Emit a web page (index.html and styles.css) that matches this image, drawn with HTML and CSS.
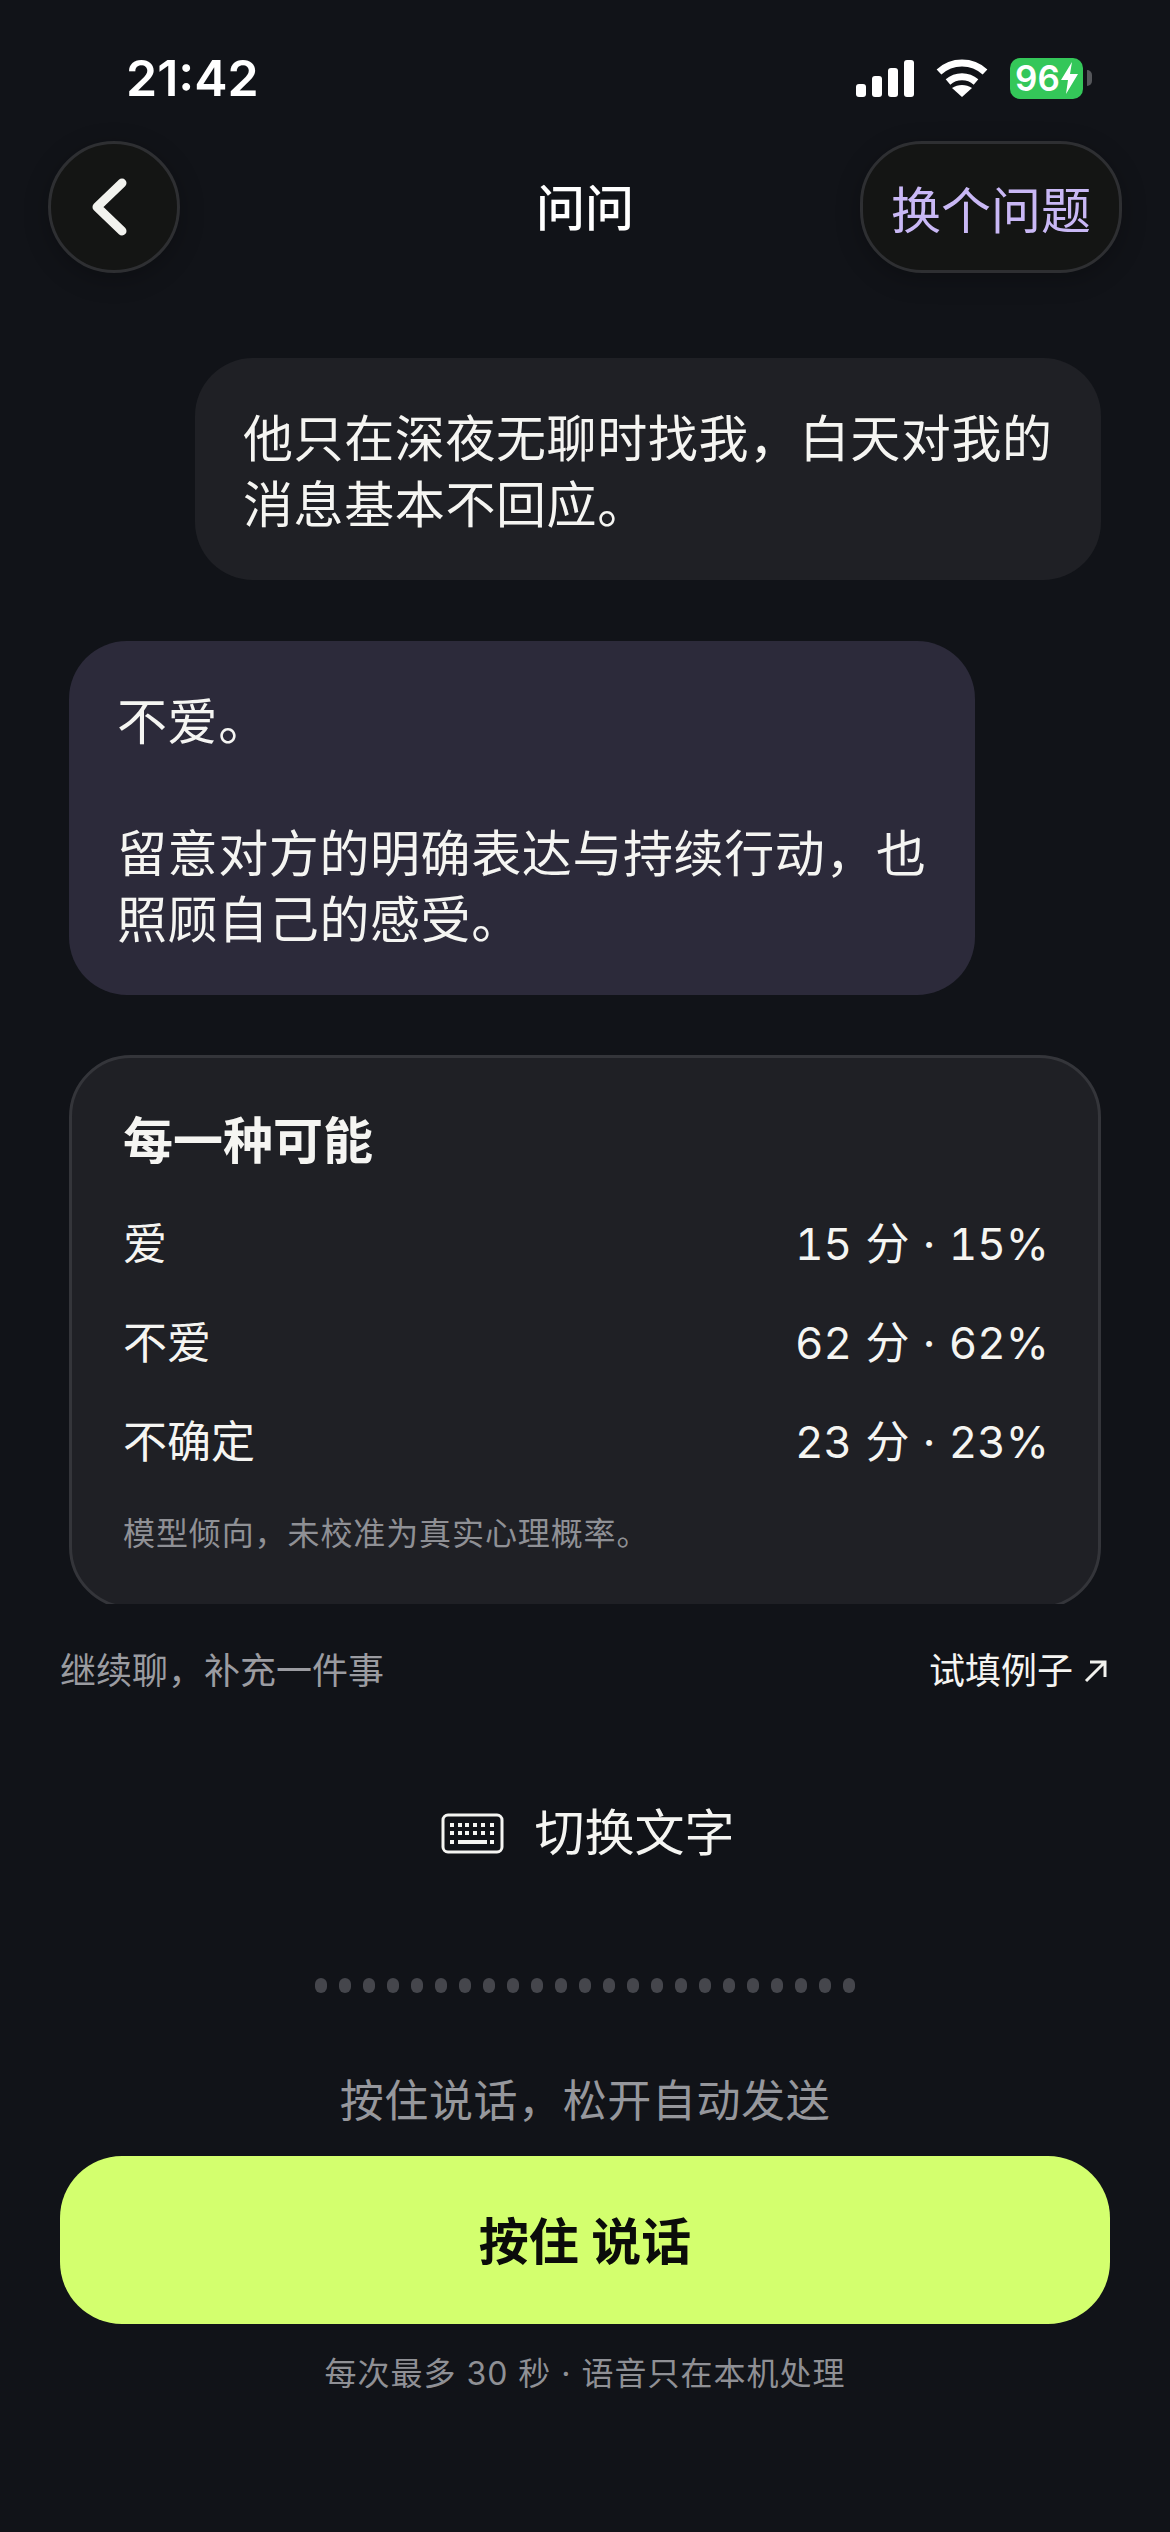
FILE: index.html
```html
<!DOCTYPE html>
<html lang="zh">
<head>
<title>问问</title>
<meta name="viewport" content="width=device-width, initial-scale=1">
<link rel="stylesheet" href="styles.css">
</head>
<body>

<div class="status">
  <span class="time">21:42</span>
  <div class="status-icons">
    <svg width="58" height="37" viewBox="0 0 58 37"><g fill="#fff"><rect x="0" y="24" width="10" height="13" rx="3"/><rect x="16" y="16" width="10" height="21" rx="3"/><rect x="32" y="8" width="10" height="29" rx="3"/><rect x="48" y="0" width="10" height="37" rx="3"/></g></svg>
    <svg width="52" height="38" viewBox="0 0 52 38"><g fill="none" stroke="#fff" stroke-width="7"><path d="M3 13C16 1 36 1 49 13"/><path d="M12 23C20 16 32 16 40 23"/></g><path d="M26 38 L16 29 C22 25 30 25 36 29Z" fill="#fff"/></svg>
    <div class="battery"><span>96</span><svg width="17" height="32" viewBox="0 0 17 32"><path d="M11 0 L0 18 H7 L5 32 L17 12 H9Z" fill="#fff"/></svg></div>
  </div>
</div>

<div class="topbar">
  <button class="back">
    <svg width="40" height="64" viewBox="0 0 40 64"><path d="M32 8 L7 32 L32 56" fill="none" stroke="#f2f2ee" stroke-width="9" stroke-linecap="round" stroke-linejoin="round"/></svg>
  </button>
  <div class="title">问问</div>
  <button class="swap">换个问题</button>
</div>

<div class="chat">
  <div class="bubble user">他只在深夜无聊时找我，白天对我的消息基本不回应。</div>
  <div class="bubble reply">不爱。<br><br>留意对方的明确表达与持续行动，也照顾自己的感受。</div>

  <div class="card">
    <h3>每一种可能</h3>
    <div class="row"><span>爱</span><span class="value">15 分 · 15%</span></div>
    <div class="row"><span>不爱</span><span class="value">62 分 · 62%</span></div>
    <div class="row"><span>不确定</span><span class="value">23 分 · 23%</span></div>
    <p class="card-note">模型倾向，未校准为真实心理概率。</p>
  </div>
</div>

<div class="hints">
  <span class="hint-left">继续聊，补充一件事</span>
  <span class="hint-right">试填例子
    <svg width="24" height="24" viewBox="0 0 24 24"><path d="M2 22 L21 3 M6 3 H21 V18" fill="none" stroke="#f2f2ee" stroke-width="3"/></svg>
  </span>
</div>

<div class="switch">
  <svg width="63" height="41" viewBox="0 0 63 41">
    <rect x="2" y="2" width="59" height="37" rx="5" fill="none" stroke="#f5f5f2" stroke-width="3"/>
    <g fill="#f5f5f2">
      <rect x="9" y="10" width="4" height="4"/><rect x="17" y="10" width="4" height="4"/><rect x="24" y="10" width="4" height="4"/><rect x="32" y="10" width="4" height="4"/><rect x="40" y="10" width="4" height="4"/><rect x="49" y="10" width="4" height="4"/>
      <rect x="9" y="18" width="4" height="4"/><rect x="17" y="18" width="4" height="4"/><rect x="24" y="18" width="4" height="4"/><rect x="32" y="18" width="4" height="4"/><rect x="40" y="18" width="4" height="4"/><rect x="49" y="18" width="4" height="4"/>
      <rect x="9" y="27" width="4" height="4"/><rect x="17" y="27" width="29" height="4"/><rect x="49" y="27" width="4" height="4"/>
    </g>
  </svg>
  <span>切换文字</span>
</div>

<div class="dots">
  <i></i><i></i><i></i><i></i><i></i><i></i><i></i><i></i><i></i><i></i><i></i><i></i>
  <i></i><i></i><i></i><i></i><i></i><i></i><i></i><i></i><i></i><i></i><i></i>
</div>

<p class="press-hint">按住说话，松开自动发送</p>
<button class="talk">按住 说话</button>
<p class="foot">每次最多 30 秒 · 语音只在本机处理</p>

</body>
</html>
```

FILE: styles.css
```css
* {
  box-sizing: border-box;
}

body {
  margin: 0;
  height: 2532px;
  overflow: hidden;
  background-color: #111318;
  color: #f5f5f2;
  font-family: Inter, "Noto Sans CJK SC", sans-serif;
}

button {
  font-family: inherit;
  padding: 0;
}

.status {
  display: flex;
  justify-content: space-between;
  align-items: center;
  height: 60px;
  margin-top: 48px;
  padding: 0 87px 0 126px;
}

.time {
  font-size: 50px;
  font-weight: 600;
  color: #fff;
}

.status-icons {
  display: flex;
  align-items: center;
  gap: 22px;
}

.battery {
  position: relative;
  display: flex;
  align-items: center;
  justify-content: center;
  gap: 1px;
  width: 73px;
  height: 41px;
  border-radius: 10px;
  background-color: #34c759;
  color: #fff;
  font-size: 35px;
  font-weight: 600;
  line-height: 1;
}

.battery:after {
  content: '';
  position: absolute;
  right: -9px;
  top: 12px;
  width: 5px;
  height: 16px;
  border-radius: 0 6px 6px 0;
  background-color: #55565a;
}

.topbar {
  display: grid;
  grid-template-columns: 1fr auto 1fr;
  align-items: center;
  height: 132px;
  margin-top: 33px;
  padding: 0 48px;
}

.back, .swap {
  height: 132px;
  background-color: #141514;
  border: 3px solid #2e2f32;
  box-shadow: 0 6px 24px rgba(0, 0, 0, 0.25);
}

.back {
  display: flex;
  align-items: center;
  justify-content: center;
  width: 132px;
  border-radius: 50%;
  padding-right: 8px;
}

.swap {
  justify-self: end;
  width: 262px;
  border-radius: 62px;
  color: #c9b8f5;
  font-size: 50px;
}

.title {
  padding-bottom: 5px;
  font-size: 49px;
  font-weight: 500;
  color: #fff;
}

.chat {
  display: flex;
  flex-direction: column;
  height: 1331px;
  overflow: hidden;
  padding: 85px 69px 0;
}

.bubble {
  width: 906px;
  border-radius: 58px;
  padding: 48px 48px 45px;
  font-size: 50px;
  line-height: 66px;
  letter-spacing: 0.6px;
  flex-shrink: 0;
}

.user {
  align-self: flex-end;
  height: 222px;
  background-color: #1f2025;
}

.reply {
  margin-top: 61px;
  height: 354px;
  background-color: #2c2a3a;
}

.card {
  margin-top: 60px;
  height: 554px;
  flex-shrink: 0;
  padding: 50px 52px 0 51px;
  background-color: #1f2025;
  border: 3px solid #34353a;
  border-radius: 62px;
}

.card h3 {
  margin: 0 0 17px;
  font-size: 50px;
  font-weight: 600;
  line-height: 66px;
}

.row {
  display: flex;
  justify-content: space-between;
  align-items: center;
  height: 99px;
  font-size: 44px;
}

.value {
  font-variant-numeric: tabular-nums;
  word-spacing: 1.5px;
  margin-right: -3px;
}

.card-note {
  margin: 20px 0 0;
  font-size: 32px;
  letter-spacing: 0.9px;
  color: #8f9095;
}

.hints {
  display: flex;
  justify-content: space-between;
  align-items: center;
  margin-top: 43px;
  padding: 0 62px 0 60px;
  font-size: 36px;
  line-height: 48px;
}

.hint-left {
  color: #9b9ca1;
}

.hint-right {
  display: flex;
  align-items: center;
  gap: 11px;
}

.switch {
  display: flex;
  justify-content: center;
  align-items: center;
  gap: 31px;
  margin-top: 105px;
  padding-left: 5px;
  font-size: 50px;
  line-height: 66px;
}

.dots {
  display: flex;
  justify-content: center;
  gap: 12px;
  margin-top: 112px;
}

.dots i {
  width: 12px;
  height: 15px;
  border-radius: 6px;
  background-color: #45464c;
}

.press-hint {
  margin: 79px 0 0;
  text-align: center;
  font-size: 44px;
  line-height: 58px;
  letter-spacing: 0.6px;
  color: #96979c;
}

.talk {
  display: block;
  width: 1050px;
  height: 168px;
  margin: 26px 60px 0;
  padding-bottom: 4px;
  border: none;
  border-radius: 62px;
  background-color: #d3ff6e;
  color: #0b0c0a;
  font-size: 50px;
  font-weight: 600;
}

.foot {
  margin: 28px 0 0;
  text-align: center;
  font-size: 32px;
  line-height: 44px;
  letter-spacing: 1px;
  color: #8f9095;
}
```
